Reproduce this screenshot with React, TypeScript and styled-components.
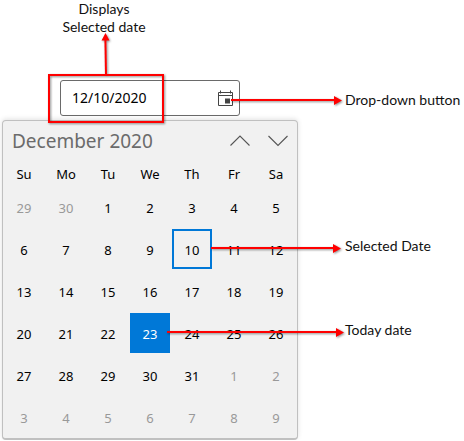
import React from 'react';
import styled, { createGlobalStyle } from 'styled-components';

const GlobalStyle = createGlobalStyle`
  * { box-sizing: border-box; }
  body { margin: 0; background: #fff; font-family: "Noto Sans", "Open Sans", sans-serif; }
`;

const Figure = styled.main`
  position: relative;
  display: flex;
  align-items: flex-start;
  padding-left: 2px;
`;

const PickerColumn = styled.section`
  flex: none;
  display: flex;
  flex-direction: column;
`;

const Caption = styled.span`
  font-family: Lato, sans-serif;
  font-size: 14px;
  line-height: 18px;
  color: #111;
  white-space: nowrap;
`;

const TopCaption = styled(Caption)`
  width: 116px;
  margin-left: 44px;
  text-align: center;
`;

const SideCaptions = styled.aside`
  flex: 1;
  display: flex;
  flex-direction: column;
  gap: 128px;
  padding: 91px 0 0 47px;
`;

const DateCaptions = styled.div`
  display: flex;
  flex-direction: column;
  gap: 66px;
`;

const DateField = styled.div`
  display: flex;
  align-items: center;
  width: 180px;
  height: 36px;
  margin: 44px 0 4px 58px;
  border: 1px solid #6a6a6a;
  border-radius: 3px;
  background: #fff;
`;

const DateInput = styled.input`
  flex: 1;
  min-width: 0;
  height: 100%;
  padding: 0 0 2px 11px;
  border: 0;
  outline: 0;
  background: transparent;
  font: 14px "Noto Sans", sans-serif;
  color: #000;
`;

const IconButton = styled.button`
  display: flex;
  align-items: center;
  justify-content: center;
  width: 28px;
  height: 32px;
  padding: 0;
  border: 0;
  background: transparent;
  color: #555;
`;

const Calendar = styled.section`
  width: 296px;
  border: 1px solid #c0c0c0;
  border-bottom-width: 2px;
  border-radius: 4px;
  background: #f1f1f1;
  box-shadow: 0 -1px 5px rgba(0, 0, 0, 0.12);
`;

const CalendarHeader = styled.header`
  display: flex;
  align-items: center;
  height: 41px;
  gap: 10px;
  padding: 0 5px 2px 9px;
`;

const MonthButton = styled.button`
  flex: 1;
  padding: 0;
  border: 0;
  background: transparent;
  font: 19px/28px "Noto Sans", sans-serif;
  color: #6b6b6b;
  text-align: left;
  white-space: nowrap;
`;

const DayTable = styled.table`
  width: 100%;
  table-layout: fixed;
  border-collapse: collapse;
`;

const Weekday = styled.th`
  height: 24px;
  padding: 0;
  font-size: 13px;
  line-height: 20px;
  font-weight: 400;
  color: #000;
`;

const DayCell = styled.td`
  height: 42px;
  padding: 1px;
`;

type DayKind = 'normal' | 'outside' | 'selected' | 'today';

const DayButton = styled.button<{ $kind: DayKind }>`
  display: block;
  width: 100%;
  height: 40px;
  padding: 2px 0 0;
  border: 2px solid ${({ $kind }) => ($kind === 'selected' || $kind === 'today' ? '#0078d7' : 'transparent')};
  background: ${({ $kind }) => ($kind === 'today' ? '#0078d7' : 'transparent')};
  font: 13px/20px "Noto Sans", sans-serif;
  color: ${({ $kind }) => ($kind === 'today' ? '#fff' : $kind === 'outside' ? '#999' : '#000')};
`;

const Annotations = styled.svg`
  position: absolute;
  top: 0;
  left: 0;
  pointer-events: none;
  filter: drop-shadow(1px 1px 1px rgba(0, 0, 0, 0.45));
`;

const weekdays = ['Su', 'Mo', 'Tu', 'We', 'Th', 'Fr', 'Sa'];

const LEADING_DAYS = 2;
const weeks = Array.from({ length: 6 }, (_, week) =>
  Array.from({ length: 7 }, (_, column) => {
    const offset = week * 7 + column - LEADING_DAYS + 1;
    const outside = offset < 1 || offset > 31;
    const day = offset < 1 ? offset + 30 : offset > 31 ? offset - 31 : offset;
    const kind: DayKind = outside ? 'outside' : day === 10 ? 'selected' : day === 23 ? 'today' : 'normal';
    return { day, kind };
  }),
);

const CalendarIcon = () => (
  <svg width="16" height="17" viewBox="0 0 16 17" fill="none" stroke="#444" aria-hidden="true">
    <path d="M1.500 2.500h14v13h-14zM1.500 5.500h14M3.500 0.500v3M13.500 0.500v3" />
    <path d="M8 8.500h5v5H8z" fill="#444" stroke="none" />
  </svg>
);

const Chevron = ({ up = false }: { up?: boolean }) => (
  <svg width="22" height="14" viewBox="0 0 22 14" fill="none" stroke="currentColor" strokeWidth="1.1" aria-hidden="true">
    <path d={up ? 'M1.5 11.5 11 2l9.5 9.5' : 'M1.5 2 11 11.5 20.5 2'} />
  </svg>
);

export default function App() {
  return (
    <>
      <GlobalStyle />
      <Figure>
        <PickerColumn>
          <TopCaption>
            Displays
            <br />
            Selected date
          </TopCaption>
          <DateField>
            <DateInput aria-label="Date" defaultValue="12/10/2020" />
            <IconButton type="button" aria-label="Open calendar">
              <CalendarIcon />
            </IconButton>
          </DateField>
          <Calendar aria-label="Calendar">
            <CalendarHeader>
              <MonthButton type="button">December 2020</MonthButton>
              <IconButton type="button" aria-label="Previous month">
                <Chevron up />
              </IconButton>
              <IconButton type="button" aria-label="Next month">
                <Chevron />
              </IconButton>
            </CalendarHeader>
            <DayTable>
              <thead>
                <tr>
                  {weekdays.map((name) => (
                    <Weekday key={name} scope="col">{name}</Weekday>
                  ))}
                </tr>
              </thead>
              <tbody>
                {weeks.map((week, index) => (
                  <tr key={index}>
                    {week.map(({ day, kind }) => (
                      <DayCell key={day}>
                        <DayButton type="button" $kind={kind}>{day}</DayButton>
                      </DayCell>
                    ))}
                  </tr>
                ))}
              </tbody>
            </DayTable>
          </Calendar>
        </PickerColumn>
        <SideCaptions>
          <Caption>Drop-down button</Caption>
          <DateCaptions>
            <Caption>Selected Date</Caption>
            <Caption>Today date</Caption>
          </DateCaptions>
        </SideCaptions>
        <Annotations width="346" height="340" viewBox="0 0 346 340" aria-hidden="true">
          <g fill="none" stroke="#f00" strokeWidth="2">
            <path d="M49 75h114v47H49z" />
            <path d="M106 75 105.400 39" />
            <path d="M231 100h104M211 248h123M167 332h170" />
          </g>
          <path
            d="M105.500 33l4 7.500h-8zM342 100.500l-8 4.500v-9zM341 248.500l-8 4.500v-9zM344 332.500l-8 4.500v-9z"
            fill="#f00"
          />
        </Annotations>
      </Figure>
    </>
  );
}
